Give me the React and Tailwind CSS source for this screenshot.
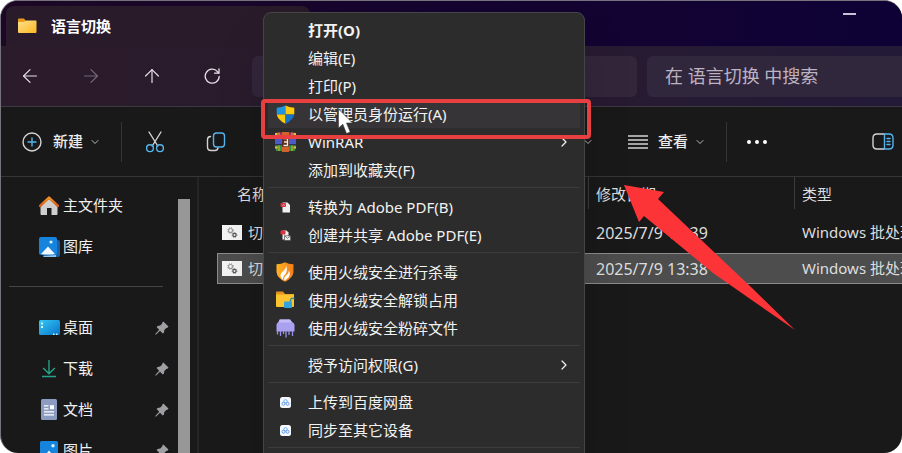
import React, { useState } from 'react';
import { ArrowLeft, ArrowRight, ArrowUp, ChevronDown, ChevronRight } from 'lucide-react';

const FolderIcon = () => (
  <svg width="19" height="16" viewBox="0 0 19 16">
    <defs>
      <linearGradient id="folder" x1="0" y1="0" x2="1" y2="1">
        <stop offset="0" stopColor="#ffe18c" />
        <stop offset="1" stopColor="#fbb823" />
      </linearGradient>
    </defs>
    <path d="M0 1.5Q0 0.5 1 0.5H6L8 3H18V6H0Z" fill="#e89a1c" />
    <path d="M0 4H6L8 2.5H18Q18.5 2.5 18.5 3.2V14Q18.5 15 17.5 15H1Q0 15 0 14Z" fill="url(#folder)" />
  </svg>
);

const RefreshIcon = () => (
  <svg width="17" height="18" viewBox="0 0 17 18" fill="none" stroke="currentColor" strokeWidth="1.3" strokeLinecap="round" strokeLinejoin="round">
    <path d="M15.2 9.5A7 7 0 1 1 13.5 4.6L14.5 6" />
    <path d="M15 1.8V6.2H10.6" />
  </svg>
);

const NewIcon = () => (
  <svg width="20" height="20" viewBox="0 0 20 20" fill="none" strokeWidth="1.4" strokeLinecap="round">
    <circle cx="10" cy="10" r="9" stroke="#d4d4d4" />
    <path d="M10 6V14M6 10H14" stroke="#55b5ec" />
  </svg>
);

const CutIcon = () => (
  <svg width="20" height="22" viewBox="0 0 20 22" fill="none" strokeWidth="1.4" strokeLinecap="round">
    <path d="M4 1L12.8 15M16 1L7.2 15" stroke="#d4d4d4" />
    <circle cx="5" cy="17.2" r="3.4" stroke="#55b5ec" />
    <circle cx="15" cy="17.2" r="3.4" stroke="#55b5ec" />
  </svg>
);

const CopyIcon = () => (
  <svg width="20" height="20" viewBox="0 0 20 20" fill="none" strokeWidth="1.4" strokeLinecap="round">
    <path d="M4.5 4.5Q1.5 4.8 1.5 7.5V15Q1.5 18.5 5 18.5H9Q11.5 18.5 12 16" stroke="#d4d4d4" />
    <rect x="7.5" y="1" width="11" height="14" rx="3" stroke="#55b5ec" />
  </svg>
);

const SortIcon = () => (
  <svg width="20" height="16" viewBox="0 0 20 16" fill="none" stroke="#d4d4d4" strokeWidth="1.4">
    <path d="M5 15V1L1 5M15 1V15L19 11" />
  </svg>
);

const ListIcon = () => (
  <svg width="20" height="14" viewBox="0 0 20 14" stroke="#d4d4d4" strokeWidth="1.3">
    <path d="M0 1H20M0 5H20M0 9H20M0 13H20" />
  </svg>
);

const DetailsIcon = () => (
  <svg width="22" height="17" viewBox="0 0 22 17" fill="none" strokeWidth="1.4" strokeLinecap="round">
    <path d="M12 1H5Q1 1 1 5V12Q1 16 5 16H12" stroke="#d4d4d4" />
    <path d="M12.5 1H17Q21 1 21 5V12Q21 16 17 16H12.5Z" stroke="#55b5ec" />
    <path d="M15 5.5H18M15 8.5H18M15 11.5H18" stroke="#55b5ec" />
  </svg>
);

const HomeIcon = () => (
  <svg width="20" height="20" viewBox="0 0 20 20">
    <defs>
      <linearGradient id="roof" x1="0" y1="0" x2="0" y2="1">
        <stop offset="0" stopColor="#f5941f" />
        <stop offset="1" stopColor="#d8591c" />
      </linearGradient>
    </defs>
    <path d="M1.5 10L10 3L18.5 10V18Q18.5 19 17.5 19H12.5V12H8V19H2.5Q1.5 19 1.5 18Z" fill="#cfcfd0" />
    <path d="M1 10L10 1.6L19 10" fill="none" stroke="url(#roof)" strokeWidth="2.4" strokeLinecap="round" strokeLinejoin="round" />
  </svg>
);

const GalleryIcon = () => (
  <svg width="21" height="20" viewBox="0 0 21 20">
    <rect x="4" y="3" width="17" height="17" rx="2" fill="#1c5ea5" />
    <path d="M4 19L17 18V20H6Q4 20 4 19Z" fill="#8fc7f5" />
    <rect x="0" y="0" width="18" height="18" rx="2" fill="#1684dc" />
    <path d="M2 17L9 9.5L16 17Q9 18 2 17Z" fill="#f3f9ff" />
    <circle cx="12" cy="5" r="1.6" fill="#d6f2ff" />
  </svg>
);

const DesktopIcon = () => (
  <svg width="21" height="16" viewBox="0 0 21 16">
    <defs>
      <linearGradient id="desk" x1="0" y1="0" x2="1" y2="1">
        <stop offset="0" stopColor="#35c8f4" />
        <stop offset="1" stopColor="#0874ca" />
      </linearGradient>
    </defs>
    <rect width="21" height="15" rx="1.5" fill="url(#desk)" />
    <path d="M2 2.5H4V4.5H2ZM2 6H4V8H2ZM14 13.5H15.5V15H14ZM17 13.5H18.5V15H17Z" fill="#d4f6ff" />
  </svg>
);

const DownloadIcon = () => (
  <svg width="16" height="19" viewBox="0 0 16 19" fill="none" stroke="#25a386" strokeWidth="1.4">
    <path d="M8 1V14.5M2.2 9L8 14.8L13.8 9" />
    <path d="M1 17.5H15" />
  </svg>
);

const DocIcon = () => (
  <svg width="16" height="21" viewBox="0 0 16 21">
    <rect width="16" height="21" rx="1.5" fill="#8b9cc0" />
    <path d="M3 6.8H7.5M3 9.8H7.5M3 12.8H13M3 15.8H13" stroke="#fff" strokeWidth="1.2" />
    <rect x="9" y="6.2" width="4" height="4" fill="#fff" />
  </svg>
);

const PictureIcon = () => (
  <svg width="18" height="20" viewBox="0 0 18 20">
    <rect width="18" height="20" rx="1.5" fill="#1684dc" />
    <path d="M3 17L9 9.5L15 17Z" fill="#f3f9ff" />
    <circle cx="13" cy="4.8" r="1.7" fill="#d6f2ff" />
  </svg>
);

const PinIcon = () => (
  <svg width="14" height="14" viewBox="0 0 14 14" fill="#9d9fa3">
    <path d="M8.3 0.5L13.5 5.6L12.4 6.7L11.3 6.9L9.3 9L9 11.4L7.8 12.4L5 9.7L1.1 13.5L0.3 13.7L0.5 12.8L4.2 8.8L1.6 6.1L2.6 5L5.2 4.6L7.2 2.6L7.3 1.5Z" />
  </svg>
);

const BatchIcon = () => (
  <svg width="20" height="15" viewBox="0 0 20 15" className="shrink-0">
    <rect width="20" height="15" fill="#f4f4f4" />
    <circle cx="8.5" cy="5.5" r="2" fill="none" stroke="#9a9a9a" strokeWidth="1.1" />
    <circle cx="8.5" cy="5.5" r="3" fill="none" stroke="#9a9a9a" strokeWidth="1" strokeDasharray="1 1.4" />
    <circle cx="12.5" cy="10" r="1.6" fill="none" stroke="#555" strokeWidth="1.2" />
    <circle cx="12.5" cy="10" r="2.4" fill="none" stroke="#555" strokeWidth="0.8" strokeDasharray="1 1" />
  </svg>
);

const ShieldIcon = () => (
  <svg width="19" height="19" viewBox="0 0 19 19">
    <clipPath id="shield">
      <path d="M9.5 0.5Q13 2.6 18.3 2.8V9Q17.5 15 9.5 18.7Q1.5 15 0.7 9V2.8Q6 2.6 9.5 0.5Z" />
    </clipPath>
    <g clipPath="url(#shield)">
      <rect width="9.5" height="9.5" fill="#1f95e0" />
      <rect x="9.5" width="9.5" height="9.5" fill="#fdc90c" />
      <rect y="9.5" width="9.5" height="9.5" fill="#fdc90c" />
      <rect x="9.5" y="9.5" width="9.5" height="9.5" fill="#1774c8" />
    </g>
  </svg>
);

const RarIcon = () => (
  <svg width="21" height="20" viewBox="0 0 21 20">
    <path d="M1 0.5H20V6.5H1Z" fill="#a8305f" />
    <path d="M0 6.5H21V12.5H0Z" fill="#4a5bc8" />
    <path d="M0 13H21L20 19H1Z" fill="#2f9440" />
    <path d="M0 6.5H21M0 12.8H21" stroke="#28204a" strokeWidth="0.8" />
    <path d="M0 1H2.5V3H0ZM18.5 1H21V3H18.5ZM0 14.5H2.5V16.5H0ZM18.5 14.5H21V16.5H18.5Z" fill="#e0c04a" />
    <path d="M4 0.5V6M17 0.5V6M4 13.5V19M17 13.5V19" stroke="#d9a72c" strokeWidth="1.2" />
    <rect x="7" y="0" width="7" height="20" fill="#d0622a" />
    <rect x="7" y="5" width="7" height="10" rx="1" fill="#5a2f22" />
    <path d="M8.5 6.5H12.5V13.5H8.5M9 10H12" fill="none" stroke="#f5e9d8" strokeWidth="1.3" />
  </svg>
);

const PdfIcon = () => (
  <svg width="11" height="11" viewBox="0 0 11 11">
    <path d="M2.5 0.5H7.5L10 3V10.5H2.5Z" fill="#efefef" />
    <rect x="0.5" y="1" width="5.5" height="4" rx="1" fill="#d9333b" />
    <path d="M2 4L4 2.3L4.7 4" fill="none" stroke="#f7b9bb" strokeWidth="0.6" />
  </svg>
);

const PdfShareIcon = () => (
  <svg width="11" height="11" viewBox="0 0 11 11">
    <path d="M2.5 0.5H6.5L8.5 2.5V9.5H2.5Z" fill="#efefef" />
    <rect x="0.5" y="0.5" width="5" height="4" rx="1" fill="#d9333b" />
    <rect x="4.5" y="5.8" width="6" height="4.5" fill="#efefef" stroke="#555" strokeWidth="0.7" />
    <path d="M4.8 6L7.5 8.3L10.2 6" fill="none" stroke="#555" strokeWidth="0.7" />
  </svg>
);

const HuorongIcon = () => (
  <svg width="18" height="20" viewBox="0 0 18 20">
    <defs>
      <linearGradient id="huorong" x1="0" y1="0" x2="1" y2="0">
        <stop offset="0" stopColor="#ffb321" />
        <stop offset="1" stopColor="#f47c1c" />
      </linearGradient>
    </defs>
    <path d="M9 0.3Q12.5 2.2 17.5 2.2V10Q17 16 9 19.7Q1 16 0.5 10V2.2Q5.5 2.2 9 0.3Z" fill="url(#huorong)" />
    <path d="M10 3.5Q10 7 6.5 9.8Q3.5 12.5 5 15.5Q6 17.3 7.2 18Q6.2 14.8 9.5 12Q12 9 10 3.5Z" fill="#fff" />
    <path d="M13 8.5Q13 11 10.5 13Q7.5 15.2 8.2 18.6Q13.3 16 13.8 12.5Q14 10 13 8.5Z" fill="#fff" />
  </svg>
);

const UnlockFolderIcon = () => (
  <svg width="19" height="18" viewBox="0 0 19 18">
    <path d="M0 1.5Q0 0.5 1 0.5H7L9 3H18V6H0Z" fill="#e69421" />
    <path d="M0 3.5H18V15Q18 16 17 16H1Q0 16 0 15Z" fill="#fcc42e" />
    <path d="M14.5 11V9Q15 6.5 18.5 7.5" fill="none" stroke="#3b8f93" strokeWidth="1.4" />
    <rect x="8" y="10.5" width="8" height="6.5" rx="1" fill="#32a5df" />
  </svg>
);

const ShredIcon = () => (
  <svg width="19" height="19" viewBox="0 0 19 19">
    <path d="M3.5 0.5H14L16 3Q18.5 4 18.5 6V12.5H0.5V6Q0.5 4 2.5 3Z" fill="#a9a0f0" />
    <path d="M2.5 3.5H16L14 0.5H4Z" fill="#c4baf7" />
    <path d="M1.5 12V15.5M4.5 12V17M7.5 12V15M10 12V18.5M13 12V16M16.5 12V17" stroke="#9a8fe6" strokeWidth="1.3" />
  </svg>
);

const BaiduIcon = () => (
  <svg width="11" height="11" viewBox="0 0 11 11">
    <rect width="11" height="11" rx="2.5" fill="#f5f9ff" />
    <circle cx="5.5" cy="4.3" r="1.7" fill="none" stroke="#5fb0ee" strokeWidth="0.9" />
    <circle cx="3.5" cy="6.7" r="1.5" fill="none" stroke="#4a94ea" strokeWidth="0.9" />
    <circle cx="7.5" cy="6.7" r="1.5" fill="none" stroke="#6a8cdc" strokeWidth="0.9" />
  </svg>
);

const menuGroups = [
  [
    { label: '打开(O)', bold: true },
    { label: '编辑(E)' },
    { label: '打印(P)' },
    { label: '以管理员身份运行(A)', icon: ShieldIcon, active: true },
    { label: 'WinRAR', icon: RarIcon, submenu: true },
    { label: '添加到收藏夹(F)' },
  ],
  [
    { label: '转换为 Adobe PDF(B)', icon: PdfIcon },
    { label: '创建并共享 Adobe PDF(E)', icon: PdfShareIcon },
  ],
  [
    { label: '使用火绒安全进行杀毒', icon: HuorongIcon },
    { label: '使用火绒安全解锁占用', icon: UnlockFolderIcon },
    { label: '使用火绒安全粉碎文件', icon: ShredIcon },
  ],
  [{ label: '授予访问权限(G)', submenu: true }],
  [
    { label: '上传到百度网盘', icon: BaiduIcon },
    { label: '同步至其它设备', icon: BaiduIcon },
  ],
];

const places = [
  { label: '主文件夹', icon: HomeIcon },
  { label: '图库', icon: GalleryIcon },
];

const pinned = [
  { label: '桌面', icon: DesktopIcon },
  { label: '下载', icon: DownloadIcon },
  { label: '文档', icon: DocIcon },
  { label: '图片', icon: PictureIcon },
];

const files = [
  { id: 1, name: '切换', date: '2025/7/9 13:39', type: 'Windows 批处理文件' },
  { id: 2, name: '切换', date: '2025/7/9 13:38', type: 'Windows 批处理文件' },
];

function TitleBar() {
  return (
    <header className="flex h-[45px] shrink-0 justify-between bg-linear-to-r from-[#1c0724] via-[#150430] to-[#0e0135] pl-[5px] pt-[5px]">
      <div className="flex w-[304px] items-center gap-[14px] rounded-t-lg bg-[#2a1b2b] pl-3">
        <FolderIcon />
        <h1 className="text-[15px] font-bold text-white">语言切换</h1>
      </div>
      <button aria-label="最小化" className="mr-[30px] flex h-4 w-[46px] items-center justify-center">
        <span className="h-[2px] w-[13px] bg-[#c9c2d6]" />
      </button>
    </header>
  );
}

function NavBar() {
  const [query, setQuery] = useState('');

  return (
    <nav className="flex h-[61px] shrink-0 items-center border-b border-[#3c3840] bg-linear-to-r from-[#2b1b2b] via-[#291b2e] to-[#231a38] text-[#e6dfe8]">
      <div className="flex w-[251px] shrink-0 gap-[41px] pl-[18px]">
        <button aria-label="后退" className="w-5">
          <ArrowLeft size={22} strokeWidth={1.3} />
        </button>
        <button aria-label="前进" className="w-5 text-[#75687a]">
          <ArrowRight size={22} strokeWidth={1.3} />
        </button>
        <button aria-label="向上" className="w-5">
          <ArrowUp size={22} strokeWidth={1.3} />
        </button>
        <button aria-label="刷新" className="flex w-5 items-center justify-center">
          <RefreshIcon />
        </button>
      </div>
      <div className="h-[41px] w-[385px] shrink-0 rounded-md bg-[#33263b]" />
      <input
        type="text"
        aria-label="搜索"
        placeholder="在 语言切换 中搜索"
        value={query}
        onChange={(e) => setQuery(e.target.value)}
        className="ml-[10px] h-[41px] min-w-0 flex-1 rounded-l-md bg-[#31273d] pl-[18px] text-[18px] placeholder-[#bcb3c2] outline-none"
      />
    </nav>
  );
}

function Toolbar() {
  return (
    <div className="flex h-[70px] shrink-0 items-center border-b border-[#353536] bg-[#19191a] pl-[21px] text-[15px] font-medium text-[#ececec]">
      <button className="flex items-center">
        <NewIcon />
        <span className="ml-[11px]">新建</span>
        <ChevronDown size={12} strokeWidth={1.5} className="ml-[6px]" />
      </button>
      <span className="ml-5 h-10 w-px bg-[#353536]" />
      <button aria-label="剪切" className="ml-[23px]">
        <CutIcon />
      </button>
      <button aria-label="复制" className="ml-[41px]">
        <CopyIcon />
      </button>
      <button className="ml-[290px] flex items-center">
        <SortIcon />
        <span className="ml-[10px]">排序</span>
        <ChevronDown size={12} strokeWidth={1.5} className="ml-[6px]" />
      </button>
      <button className="ml-[34px] flex items-center">
        <ListIcon />
        <span className="ml-[10px]">查看</span>
        <ChevronDown size={12} strokeWidth={1.5} className="ml-[6px]" />
      </button>
      <span className="ml-5 h-10 w-px bg-[#353536]" />
      <button aria-label="更多" className="ml-5 flex gap-1">
        <span className="size-1 rounded-full bg-white" />
        <span className="size-1 rounded-full bg-white" />
        <span className="size-1 rounded-full bg-white" />
      </button>
      <button aria-label="详细信息窗格" className="ml-auto mr-2">
        <DetailsIcon />
      </button>
    </div>
  );
}

function SidebarItem({ label, icon: Icon, isPinned }) {
  return (
    <li>
      <a href="#" className="flex h-[41px] items-center pl-[37px] pr-[9px] text-[15px] text-[#f0f0f0]">
        <span className="flex w-[22px] justify-center">
          <Icon />
        </span>
        <span className="ml-[3px] flex-1">{label}</span>
        {isPinned && <PinIcon />}
      </a>
    </li>
  );
}

function Sidebar() {
  return (
    <aside className="flex w-[198px] shrink-0 border-r-2 border-[#252526]">
      <div className="flex-1 pt-2">
        <ul>
          {places.map((item) => (
            <SidebarItem key={item.label} {...item} />
          ))}
        </ul>
        <hr className="mb-5 ml-2 mr-[15px] mt-[19px] border-[#454546]" />
        <ul>
          {pinned.map((item) => (
            <SidebarItem key={item.label} {...item} isPinned />
          ))}
        </ul>
      </div>
      <div className="mr-[7px] mt-[22px] w-3 bg-[#979797]" />
    </aside>
  );
}

function FileList() {
  const [selected, setSelected] = useState(2);

  return (
    <main className="min-w-0 flex-1 overflow-hidden pl-[18px]">
      <table className="w-full table-fixed whitespace-nowrap text-left text-[15px] text-[#dedede]">
        <thead>
          <tr>
            <th className="h-[35px] w-[372px] p-0 align-top font-normal">
              <div className="flex h-8 items-center border-r border-[#3b3b3c] pl-5 pt-[3px]">名称</div>
            </th>
            <th className="w-[206px] p-0 align-top font-normal">
              <div className="flex h-8 items-center border-r border-[#3b3b3c] pl-[7px] pt-[3px]">修改日期</div>
            </th>
            <th className="p-0 align-top font-normal">
              <div className="flex h-8 items-center pl-[7px] pt-[3px]">类型</div>
            </th>
          </tr>
        </thead>
        <tbody>
          {files.map((file) => {
            const cell = selected === file.id
              ? 'flex h-[31px] items-center border-y border-[#8b8b8b] bg-[#4d4d4d]'
              : 'flex h-[31px] items-center';
            return (
              <tr key={file.id} onClick={() => setSelected(file.id)}>
                <td className="p-0 pt-[5px]">
                  <div className={`${cell} gap-[6px] ${selected === file.id ? 'border-l pl-1' : 'pl-[5px]'}`}>
                    <BatchIcon />
                    {file.name}
                  </div>
                </td>
                <td className="p-0 pt-[5px]">
                  <div className={`${cell} pl-[7px] text-base`}>{file.date}</div>
                </td>
                <td className="p-0 pt-[5px]">
                  <div className={`${cell} overflow-hidden pl-[7px]`}>{file.type}</div>
                </td>
              </tr>
            );
          })}
        </tbody>
      </table>
    </main>
  );
}

function ContextMenu() {
  return (
    <div className="absolute left-[262px] top-[11px] w-[322px] rounded-lg border border-[#454545] bg-[#2c2c2c] px-1 pb-2 pt-[3px] shadow-2xl">
      {menuGroups.map((group, i) => (
        <div key={i}>
          {group.map(({ label, icon: Icon, bold, active, submenu }) => (
            <button
              key={label}
              className={`flex h-7 w-full items-center pl-[6px] pr-2 text-[15px] text-[#f2f2f2] ${active ? 'bg-[#363436]' : ''} ${bold ? 'font-bold' : ''}`}
            >
              <span className="flex w-[22px] justify-center">{Icon && <Icon />}</span>
              <span className="ml-3 flex-1 text-left">{label}</span>
              {submenu && <ChevronRight size={16} strokeWidth={1.8} />}
            </button>
          ))}
          <hr className="mb-[5px] mt-[3px] border-[#3d3d3d]" />
        </div>
      ))}
    </div>
  );
}

function Annotations() {
  return (
    <div className="pointer-events-none">
      <div className="absolute left-[260px] top-[98px] h-10 w-[330px] rounded-sm border-4 border-[#e83f41]" />
      <svg className="absolute left-[337px] top-[107px]" width="17" height="27" viewBox="0 0 17 27">
        <path d="M0.5 1V20L4.8 16.2L8.5 25.5L12.2 24L8.5 15H14.5Z" fill="#fff" stroke="#3a3a3a" strokeWidth="0.6" />
      </svg>
      <svg className="absolute left-[623px] top-[184px]" width="172" height="145" viewBox="0 0 172 145">
        <path d="M0 0L40 7L34 14L90 67L128 103L171 145L132 118L89 88L20 31L15 37Z" fill="#fd3437" />
      </svg>
    </div>
  );
}

export default function App() {
  return (
    <div className="h-screen bg-white font-['Noto_Sans','Noto_Sans_CJK_SC',sans-serif]">
      <div className="relative flex h-full flex-col overflow-hidden rounded-[18px] border-l border-t border-[#77737d] bg-[#19191a]">
        <TitleBar />
        <NavBar />
        <Toolbar />
        <div className="flex min-h-0 flex-1">
          <Sidebar />
          <FileList />
        </div>
        <ContextMenu />
        <Annotations />
      </div>
    </div>
  );
}
